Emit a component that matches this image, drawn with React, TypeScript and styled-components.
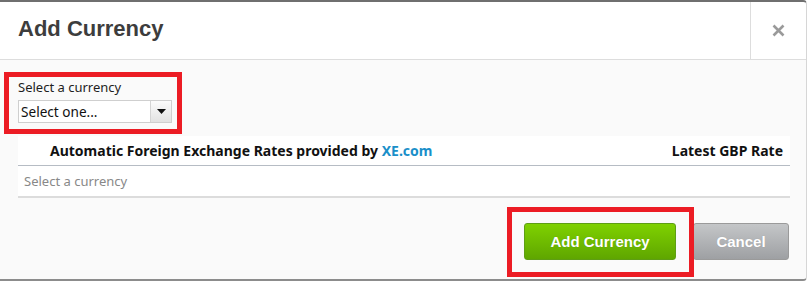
import React from "react"
import styled, { createGlobalStyle } from "styled-components"

const GlobalStyle = createGlobalStyle`
  html, body {
    margin: 0;
    padding: 0;
    background: #ffffff;
  }
  * {
    box-sizing: border-box;
  }
`

const Dialog = styled.div`
  width: 807px;
  height: 281px;
  display: flex;
  flex-direction: column;
  border-top: 2px solid #6f6f6f;
  border-bottom: 2px solid #8c8c8c;
  border-right: 1px solid #d6d6d6;
  border-radius: 0 4px 4px 0;
  background: #fafafa;
  position: relative;
`

const Header = styled.div`
  height: 58px;
  display: flex;
  align-items: stretch;
  background: #ffffff;
  border-bottom: 1px solid #dddddd;
  border-radius: 0 4px 0 0;
`

const Title = styled.h1`
  flex: 1;
  margin: 0;
  padding: 0 0 3px 18px;
  display: flex;
  align-items: center;
  font-family: "Liberation Sans", Arial, sans-serif;
  font-size: 22px;
  font-weight: bold;
  color: #3d3d3d;
`

const CloseCell = styled.div`
  width: 56px;
  display: flex;
  align-items: center;
  justify-content: center;
  border-left: 1px solid #dddddd;
  padding-bottom: 1px;
`

const Body = styled.div`
  flex: 1;
  display: flex;
  flex-direction: column;
  padding: 19px 16px 0 18px;
`

const FieldGroup = styled.div`
  position: relative;
  width: 154px;
  display: flex;
  flex-direction: column;
  gap: 5px;
`

const Highlight = styled.div<{ $top: number; $right: number; $bottom: number; $left: number }>`
  position: absolute;
  top: ${({ $top }) => $top}px;
  right: ${({ $right }) => $right}px;
  bottom: ${({ $bottom }) => $bottom}px;
  left: ${({ $left }) => $left}px;
  border: 5px solid #ec1c24;
  pointer-events: none;
  z-index: 2;
`

const Label = styled.label`
  font-family: "Noto Sans", Tahoma, sans-serif;
  font-size: 13px;
  line-height: 16px;
  color: #1e1e1e;
`

const SelectBox = styled.div`
  height: 23px;
  display: flex;
  background: #ffffff;
  border: 1px solid #cfcfcf;
`

const SelectValue = styled.div`
  flex: 1;
  display: flex;
  align-items: center;
  padding-left: 2px;
  font-family: "Noto Sans", Tahoma, sans-serif;
  font-size: 13.6px;
  color: #111111;
`

const SelectArrow = styled.div`
  width: 21px;
  display: flex;
  align-items: center;
  justify-content: center;
  border-left: 1px solid #d4d4d4;
  background: linear-gradient(#fbfbfb, #e2e2e2);
`

const RatesTable = styled.div`
  margin-top: 13px;
  display: flex;
  flex-direction: column;
  background: #ffffff;
  font-family: "Noto Sans", Tahoma, sans-serif;
  font-size: 13px;
`

const HeadRow = styled.div`
  height: 30px;
  display: flex;
  align-items: center;
  padding: 0 7px 1px 32px;
  border-bottom: 1px solid #b6bcc4;
  font-size: 14px;
  font-weight: bold;
  color: #111111;
`

const HeadCell = styled.div<{ $grow?: boolean }>`
  flex: ${({ $grow }) => ($grow ? 1 : "none")};
`

const XeLink = styled.a`
  color: #1a8fc9;
  text-decoration: none;
`

const EmptyRow = styled.div`
  height: 32px;
  display: flex;
  align-items: center;
  padding: 0 0 1px 6px;
  border-bottom: 2px solid #dcdcdc;
  color: #888888;
`

const Footer = styled.div`
  margin-top: 25px;
  display: flex;
  justify-content: flex-end;
  gap: 17px;
  padding-right: 1px;
`

const ButtonWrap = styled.div`
  position: relative;
`

const Button = styled.button<{ $primary?: boolean }>`
  height: 37px;
  width: ${({ $primary }) => ($primary ? "152px" : "96px")};
  border-radius: 3px;
  border: 1px solid ${({ $primary }) => ($primary ? "#5e9e14" : "#9a9a9a")};
  background: ${({ $primary }) =>
    $primary
      ? "linear-gradient(#7fd100, #5fa600)"
      : "linear-gradient(#c4c6c8, #9ea0a3)"};
  color: #ffffff;
  font-family: "Liberation Sans", Arial, sans-serif;
  font-size: 15px;
  font-weight: bold;
  text-shadow: 0 0 1px rgba(0, 0, 0, 0.15);
  cursor: pointer;
  padding: 0 0 1px;
`

const CloseIcon = () => (
  <svg width="13" height="13" viewBox="0 0 13 13">
    <path d="M1.5 1.5 L11.5 11.5 M11.5 1.5 L1.5 11.5" stroke="#9a9a9a" strokeWidth="2.6" />
  </svg>
)

const DownArrow = () => (
  <svg width="9" height="5" viewBox="0 0 9 5">
    <path d="M0 0 H9 L4.5 5 Z" fill="#111111" />
  </svg>
)

export default function App() {
  return (
    <>
      <GlobalStyle />
      <Dialog>
        <Header>
          <Title>Add Currency</Title>
          <CloseCell>
            <CloseIcon />
          </CloseCell>
        </Header>
        <Body>
          <FieldGroup>
            <Highlight $top={-7} $right={-10} $bottom={-11} $left={-14} />
            <Label>Select a currency</Label>
            <SelectBox>
              <SelectValue>Select one...</SelectValue>
              <SelectArrow>
                <DownArrow />
              </SelectArrow>
            </SelectBox>
          </FieldGroup>
          <RatesTable>
            <HeadRow>
              <HeadCell $grow>
                Automatic Foreign Exchange Rates provided by <XeLink href="#">XE.com</XeLink>
              </HeadCell>
              <HeadCell>Latest GBP Rate</HeadCell>
            </HeadRow>
            <EmptyRow>Select a currency</EmptyRow>
          </RatesTable>
          <Footer>
            <ButtonWrap>
              <Highlight $top={-16} $right={-18} $bottom={-17} $left={-17} />
              <Button $primary>Add Currency</Button>
            </ButtonWrap>
            <Button>Cancel</Button>
          </Footer>
        </Body>
      </Dialog>
    </>
  )
}
